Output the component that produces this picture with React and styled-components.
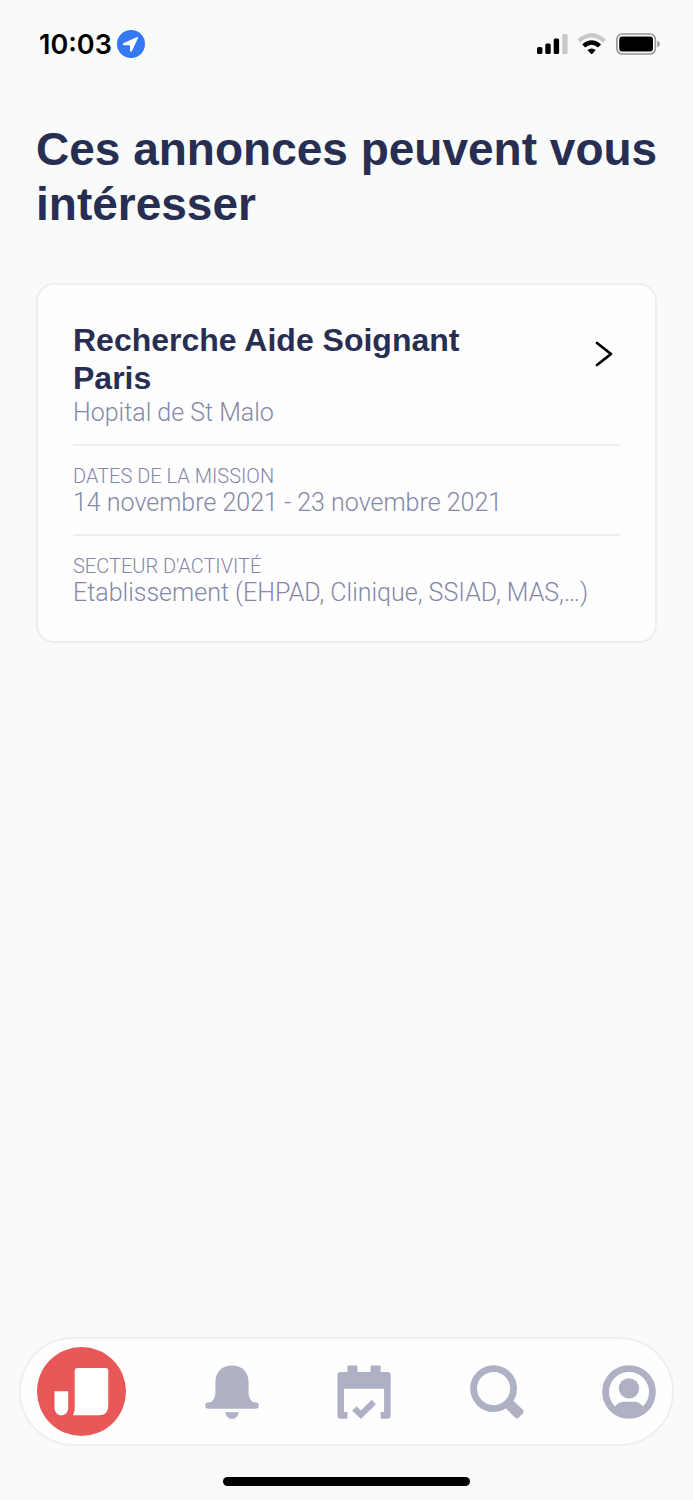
import styled, { createGlobalStyle } from "styled-components";

const annonces = [
    {
        id: 1,
        titre: "Recherche Aide Soignant Paris",
        lieu: "Hopital de St Malo",
        infos: [
            { label: "Dates de la mission", valeur: "14 novembre 2021 - 23 novembre 2021" },
            { label: "Secteur d'activité", valeur: "Etablissement (EHPAD, Clinique, SSIAD, MAS,…)" },
        ],
    },
];

function StatusBar() {
    return (
        <Status>
            <Time>
                <span>10:03</span>
                <svg width="28" height="28" viewBox="0 0 28 28">
                    <circle cx="14" cy="14" r="14" fill="#3478f6" />
                    <path d="M6.3 13.2L19.6 7.2Q21.4 6.6 20.8 8.4L14.8 21.2Q13.6 22.6 13 20.8V15.2H7.2Q4.8 14.6 6.3 13.2Z" fill="#ffffff" />
                </svg>
            </Time>
            <Indicators>
                <svg width="31" height="22" viewBox="0 0 31 22">
                    <rect x="0" y="14" width="5.4" height="7" rx="1.5" />
                    <rect x="8.3" y="10.5" width="5.4" height="10.5" rx="1.5" />
                    <rect x="16.7" y="5.6" width="5.4" height="15.4" rx="1.5" />
                    <rect x="25.2" y="1" width="5.4" height="20" rx="1.5" fill="#c8c9c9" />
                </svg>
                <svg width="30" height="22" viewBox="0 0 30 22">
                    <path d="M0.4 6.6L3.2 9.4Q14.6 -0.2 26 9.4L28.8 6.6Q14.6 -6.6 0.4 6.6Z" fill="#c8c9c9" />
                    <path d="M5.2 11.4L8.2 14.4Q14.6 9.2 21 14.4L24 11.4Q14.6 3 5.2 11.4Z" />
                    <path d="M10.4 17Q14.6 14 18.8 17L15.5 20.6Q14.6 21.6 13.7 20.6Z" />
                </svg>
                <svg width="44" height="22" viewBox="0 0 44 22">
                    <rect x="0.8" y="1" width="38.6" height="20" rx="5.6" fill="none" stroke="#949595" strokeWidth="1.6" />
                    <rect x="3.2" y="3.6" width="33.8" height="14.8" rx="3.2" />
                    <path d="M41.4 7.8Q43.8 8.6 43.8 11T41.4 14.2Z" fill="#949595" />
                </svg>
            </Indicators>
        </Status>
    )
}

function Annonce(props) {

    const { titre, lieu, infos } = props;

    return (
        <Card>
            <CardTop>
                <div>
                    <h2>{titre}</h2>
                    <Value>{lieu}</Value>
                </div>
                <OpenButton type="button" aria-label="Voir l'annonce">
                    <svg width="18" height="26" viewBox="0 0 18 26" fill="none" stroke="#000000" strokeWidth="2.8" strokeLinecap="round" strokeLinejoin="round">
                        <path d="M2 2L16 13L2 24" />
                    </svg>
                </OpenButton>
            </CardTop>
            {infos.map(info => (
                <Info key={info.label}>
                    <Label>{info.label}</Label>
                    <Value>{info.valeur}</Value>
                </Info>
            ))}
        </Card>
    )
}

function Menu() {
    return (
        <Nav>
            <Logo href="#accueil" aria-label="Accueil">
                <svg width="89" height="89" viewBox="0 0 89 89" fill="#ffffff">
                    <path d="M17.5 44.3H31.2V61C31.2 65 28 68.3 24.3 68.3S17.5 65 17.5 61Z" />
                    <path d="M40.5 21H68.5Q71.3 21 71.3 23.8V58.5Q71.3 68.3 61.5 68.3H36Q37.7 65 37.7 61V23.8Q37.7 21 40.5 21Z" />
                </svg>
            </Logo>
            <NavLink href="#notifications" aria-label="Notifications">
                <svg width="54" height="54" viewBox="0 0 54 54">
                    <path d="M10.4 17C10.4 7 17 0.4 27 0.4S43.6 7 43.6 17V27.5C43.6 32 45.3 35 48 37.2H50.4A3.2 3.2 0 0 1 50.4 43.8H3.6A3.2 3.2 0 0 1 3.6 37.2H6C8.7 35 10.4 32 10.4 27.5Z" />
                    <path d="M20.3 47.2H33.7C33.2 51.2 30.6 53.8 27 53.8S20.8 51.2 20.3 47.2Z" />
                </svg>
            </NavLink>
            <NavLink href="#missions" aria-label="Missions">
                <svg width="54" height="54" viewBox="0 0 54 54">
                    <path fillRule="evenodd" d="M10.5 0.4H20.4V7H33.6V0.4H43.6V7H50.4Q53.7 7 53.7 10.3V50.4Q53.7 53.7 50.4 53.7H43.6V47H47.1V23.7H7V47H10.5V53.7H3.7Q0.4 53.7 0.4 50.4V10.3Q0.4 7 3.7 7H10.5Z" />
                    <path d="M15.1 45.7L19.6 41.2L23.9 45.5L34.7 34.8L39 39.2L23.9 54Z" />
                </svg>
            </NavLink>
            <NavLink href="#recherche" aria-label="Recherche">
                <svg width="54" height="54" viewBox="0 0 54 54">
                    <circle cx="23.6" cy="23.6" r="20" fill="none" stroke="currentColor" strokeWidth="6.8" />
                    <path d="M35.5 43L43 35.2L52.8 44.8Q54.4 46.6 52.8 48.4L48.6 52.8Q46.8 54.4 45.2 52.8Z" />
                </svg>
            </NavLink>
            <NavLink href="#profil" aria-label="Profil">
                <svg width="54" height="54" viewBox="0 0 54 54">
                    <circle cx="27" cy="27" r="23.4" fill="none" stroke="currentColor" strokeWidth="6.8" />
                    <circle cx="27" cy="23.4" r="10.2" />
                    <path d="M12.5 42Q16.4 36.8 22 36.8H32Q37.6 36.8 41.5 42L38 49L27 52L16 49Z" />
                </svg>
            </NavLink>
        </Nav>
    )
}

export default function App() {
    return (
        <>
            <GlobalStyle />
            <Page>
                <StatusBar />
                <Main>
                    <h1>Ces annonces peuvent vous intéresser</h1>
                    {annonces.map(annonce => <Annonce key={annonce.id} {...annonce} />)}
                </Main>
                <Menu />
                <HomeBar />
            </Page>
        </>
    )
}

const GlobalStyle = createGlobalStyle`
    * {
        box-sizing: border-box;
    }

    body, h1, h2, p {
        margin: 0;
    }

    body {
        background-color: #f9fbfa;
        color: #272e52;
        font-family: "Liberation Sans", Arial, sans-serif;
    }

    svg {
        display: block;
    }
`
const Page = styled.div`
    display: flex;
    flex-direction: column;
    min-height: 100vh;
    padding-bottom: 14px;
`
const Status = styled.header`
    display: flex;
    justify-content: space-between;
    align-items: center;
    height: 88px;
    padding: 0 33px 0 39px;
    color: #000000;
`
const Time = styled.div`
    display: flex;
    align-items: center;
    gap: 5px;
    font-family: Inter, sans-serif;
    font-size: 27px;
    font-weight: 600;
`
const Indicators = styled.div`
    display: flex;
    align-items: center;
    gap: 9px;
`
const Main = styled.main`
    padding: 34px 36px;

    h1 {
        font-size: 46px;
        line-height: 55px;
        margin: 0 -16px 51px 0;
    }
`
const Card = styled.article`
    padding: 36px 35px 33px;
    border: 2px solid #eeeef2;
    border-radius: 18px;
    background-color: #fefefe;
`
const CardTop = styled.div`
    display: flex;
    justify-content: space-between;
    align-items: flex-start;
    gap: 80px;
    padding-bottom: 16px;

    h2 {
        font-size: 32px;
        line-height: 38px;
        margin-bottom: 1px;
    }
`
const OpenButton = styled.button`
    padding: 20px 7px;
    border: none;
    background: none;
    cursor: pointer;
`
const Info = styled.div`
    padding: 19px 0 16px;
    border-top: 2px solid #eeeeef;

    &:last-child {
        padding-bottom: 0;
    }
`
const Label = styled.p`
    color: #8488a6;
    font-family: Roboto, "Liberation Sans", sans-serif;
    font-size: 20px;
    font-weight: 300;
    line-height: 23px;
    text-transform: uppercase;
`
const Value = styled.p`
    color: #8488a6;
    font-family: Roboto, "Liberation Sans", sans-serif;
    font-size: 25px;
    font-weight: 300;
    line-height: 30px;
`
const Nav = styled.nav`
    display: flex;
    justify-content: space-between;
    align-items: center;
    margin: auto 19px 31px;
    padding: 8px 16px;
    border: 2px solid #eeeff2;
    border-radius: 55px;
    background-color: #fefefe;
`
const NavLink = styled.a`
    color: #aeb1c3;

    svg {
        fill: currentColor;
    }
`
const Logo = styled.a`
    border-radius: 50%;
    background-color: #e95858;
`
const HomeBar = styled.div`
    width: 247px;
    height: 9px;
    margin: 0 auto;
    border-radius: 5px;
    background-color: #000000;
`
